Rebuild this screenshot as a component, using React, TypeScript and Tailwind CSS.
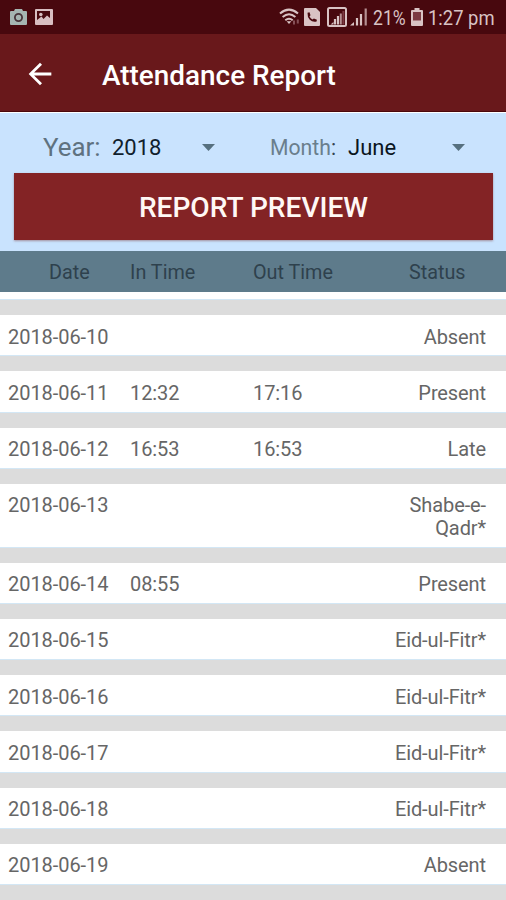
import { MdArrowBack } from 'react-icons/md';

type AttendanceRow = {
  date: string;
  inTime?: string;
  outTime?: string;
  status: string;
};

const rows: AttendanceRow[] = [
  { date: '2018-06-10', status: 'Absent' },
  { date: '2018-06-11', inTime: '12:32', outTime: '17:16', status: 'Present' },
  { date: '2018-06-12', inTime: '16:53', outTime: '16:53', status: 'Late' },
  { date: '2018-06-13', status: 'Shabe-e-Qadr*' },
  { date: '2018-06-14', inTime: '08:55', status: 'Present' },
  { date: '2018-06-15', status: 'Eid-ul-Fitr*' },
  { date: '2018-06-16', status: 'Eid-ul-Fitr*' },
  { date: '2018-06-17', status: 'Eid-ul-Fitr*' },
  { date: '2018-06-18', status: 'Eid-ul-Fitr*' },
  { date: '2018-06-19', status: 'Absent' },
];

function StatusBar() {
  return (
    <div className="flex h-[34px] shrink-0 items-center bg-[#48080e] pl-[10px] pr-[11px] text-[#d9c3c4]">
      <svg width="17" height="16" viewBox="0 0 17 16">
        <path d="M1 2h3l1-2h7l1 2h3a1 1 0 0 1 1 1v12a1 1 0 0 1-1 1H1a1 1 0 0 1-1-1V3a1 1 0 0 1 1-1z" fill="#a6b5b2" />
        <circle cx="8.5" cy="8.5" r="3.6" fill="none" stroke="#48343a" strokeWidth="1.8" />
      </svg>
      <svg width="18" height="16" viewBox="0 0 18 16" className="ml-[8px]">
        <rect width="18" height="16" rx="1" fill="#d8bec1" />
        <path d="M2 2h13v7l-3-2.5-3.500 3.500-2-2.500L2 11z" fill="#48080e" />
        <circle cx="5.8" cy="5.500" r="1.8" fill="#d8bec1" />
      </svg>

      <div className="ml-auto flex items-center">
        <svg width="23" height="18" viewBox="0 0 23 18" fill="none" stroke="currentColor" strokeWidth="2">
          <path d="M1 5.5Q10 -2.2 19 5.5M3.6 9Q10 3.4 16.4 9M6.3 12.3Q10 9.3 13.7 12.3" />
          <path d="M7.6 13.2h4.8L10 16z" fill="currentColor" stroke="none" />
          <path d="M15 12.5v4M18.800 11.500v4" stroke="#855057" strokeWidth="2" />
        </svg>
        <svg width="16" height="18" viewBox="0 0 16 18" className="ml-[2px]">
          <path d="M1 0h11l4 4v13a1 1 0 0 1-1 1H1a1 1 0 0 1-1-1V1a1 1 0 0 1 1-1z" fill="currentColor" />
          <path d="M3.500 4.800l2-.5 1 3-1 1.300q1 2 3 2.900l1.400-1.100 3 1.300-.3 1.900Q8.500 14.500 5.800 11.800 3.200 9 3.500 4.800z" fill="#48080e" />
        </svg>
        <svg width="20" height="20" viewBox="0 0 20 20" className="ml-[7px]">
          <rect x="1" y="1" width="18" height="18" rx="1.500" fill="none" stroke="currentColor" strokeWidth="2" />
          <path d="M3.500 17.500l3-2.500v2.500z" fill="currentColor" />
          <path d="M8 17.500V12M11 17.500V9" stroke="currentColor" strokeWidth="2.200" />
          <path d="M13.800 17.500V6.500" stroke="#b58f92" strokeWidth="2" />
          <path d="M16.400 17.500V4" stroke="#7b3a42" strokeWidth="2" />
        </svg>
        <svg width="18" height="18" viewBox="0 0 18 18" className="ml-[3px]">
          <path d="M0 17.500l4-3.500v3.500z" fill="currentColor" />
          <path d="M7 17.500V10M11 17.500V6" stroke="currentColor" strokeWidth="2.200" />
          <path d="M15.700 17.500V0.500" stroke="#b58f92" strokeWidth="2.200" />
        </svg>
        <span className="ml-[5px] mt-px inline-block w-[33px] origin-left scale-x-[0.88] whitespace-nowrap text-[20px] leading-none">21%</span>
        <svg width="12" height="18" viewBox="0 0 12 18" className="ml-[5px]">
          <path d="M3.500 0h5v2H11a1 1 0 0 1 1 1v14a1 1 0 0 1-1 1H1a1 1 0 0 1-1-1V3a1 1 0 0 1 1-1h2.500z" fill="currentColor" />
          <path d="M2 4h8v8.500H2z" fill="#7b3a42" />
        </svg>
        <span className="ml-[5px] mt-px inline-block w-[67px] origin-left scale-x-[0.92] whitespace-nowrap text-[20px] leading-none">1:27 pm</span>
      </div>
    </div>
  );
}

function Caret() {
  return (
    <svg width="13" height="7" viewBox="0 0 13 7">
      <path d="M0 0h13L6.500 7z" fill="#56707f" />
    </svg>
  );
}

function Filters() {
  return (
    <div className="h-[139px] shrink-0 border-t border-white bg-[#c9e3fe] pl-[14px] pr-[13px]">
      <div className="flex h-[60px] items-center pt-[9px]">
        <span className="ml-[29px] w-[69px] text-[25.900px] leading-none text-[#5f7280]">Year:</span>
        <span className="w-[90px] text-[22px] leading-none text-[#10202c]">2018</span>
        <Caret />
        <span className="ml-[55px] w-[78px] pt-px text-[21.200px] leading-none text-[#6a7e8c]">
          Month<span className="text-[#34434f]">:</span>
        </span>
        <span className="w-[104px] text-[22px] leading-none text-[#0b151d]">June</span>
        <Caret />
      </div>
      <button className="block h-[67px] w-full bg-[#832325] pt-[4px] text-[28.100px] font-medium leading-none text-[#fff8f5] shadow-[0_1px_2px_#80404080]">
        REPORT PREVIEW
      </button>
    </div>
  );
}

function TableHeader() {
  return (
    <div className="flex h-[41px] shrink-0 items-center bg-[#5e7b8b] pt-[2px] text-[19.800px] text-[#2e414d]">
      <span className="ml-[49px] w-[81px]">Date</span>
      <span className="w-[123px]">In Time</span>
      <span className="w-[156px]">Out Time</span>
      <span>Status</span>
    </div>
  );
}

function Row({ row }: { row: AttendanceRow }) {
  return (
    <div className="shrink-0 border-t-[15px] border-t-[#dcdcdc]">
      <div className="flex items-start border-b border-[#d3e7f5] bg-white pb-[7.250px] pl-[8px] pr-[20px] pt-[10.500px] text-[20px] leading-[22.500px] text-[#666666]">
        <span className="w-[122px] tracking-[-0.050px]">{row.date}</span>
        <span className="w-[123px] tracking-[-0.100px]">{row.inTime}</span>
        <span className="w-[123px] tracking-[-0.100px]">{row.outTime}</span>
        <span className="ml-auto w-[100px] text-right tracking-[-0.100px]">{row.status}</span>
      </div>
    </div>
  );
}

function App() {
  return (
    <div className="flex h-[900px] w-[506px] flex-col overflow-hidden bg-[#dcdcdc] font-['Roboto',sans-serif]">
      <StatusBar />
      <header className="flex h-[78px] shrink-0 items-center border-b border-[#4b080c] bg-[#69181b] pt-[3px]">
        <MdArrowBack className="ml-[23px] text-white" size={34} />
        <h1 className="ml-[45px] pt-[3px] text-[27.900px] font-medium leading-none text-white">Attendance Report</h1>
      </header>
      <Filters />
      <TableHeader />
      <div className="h-[8px] shrink-0 border-b border-[#d3e7f5] bg-white" />
      {rows.map((row) => (
        <Row key={row.date} row={row} />
      ))}
    </div>
  );
}

export default App;
